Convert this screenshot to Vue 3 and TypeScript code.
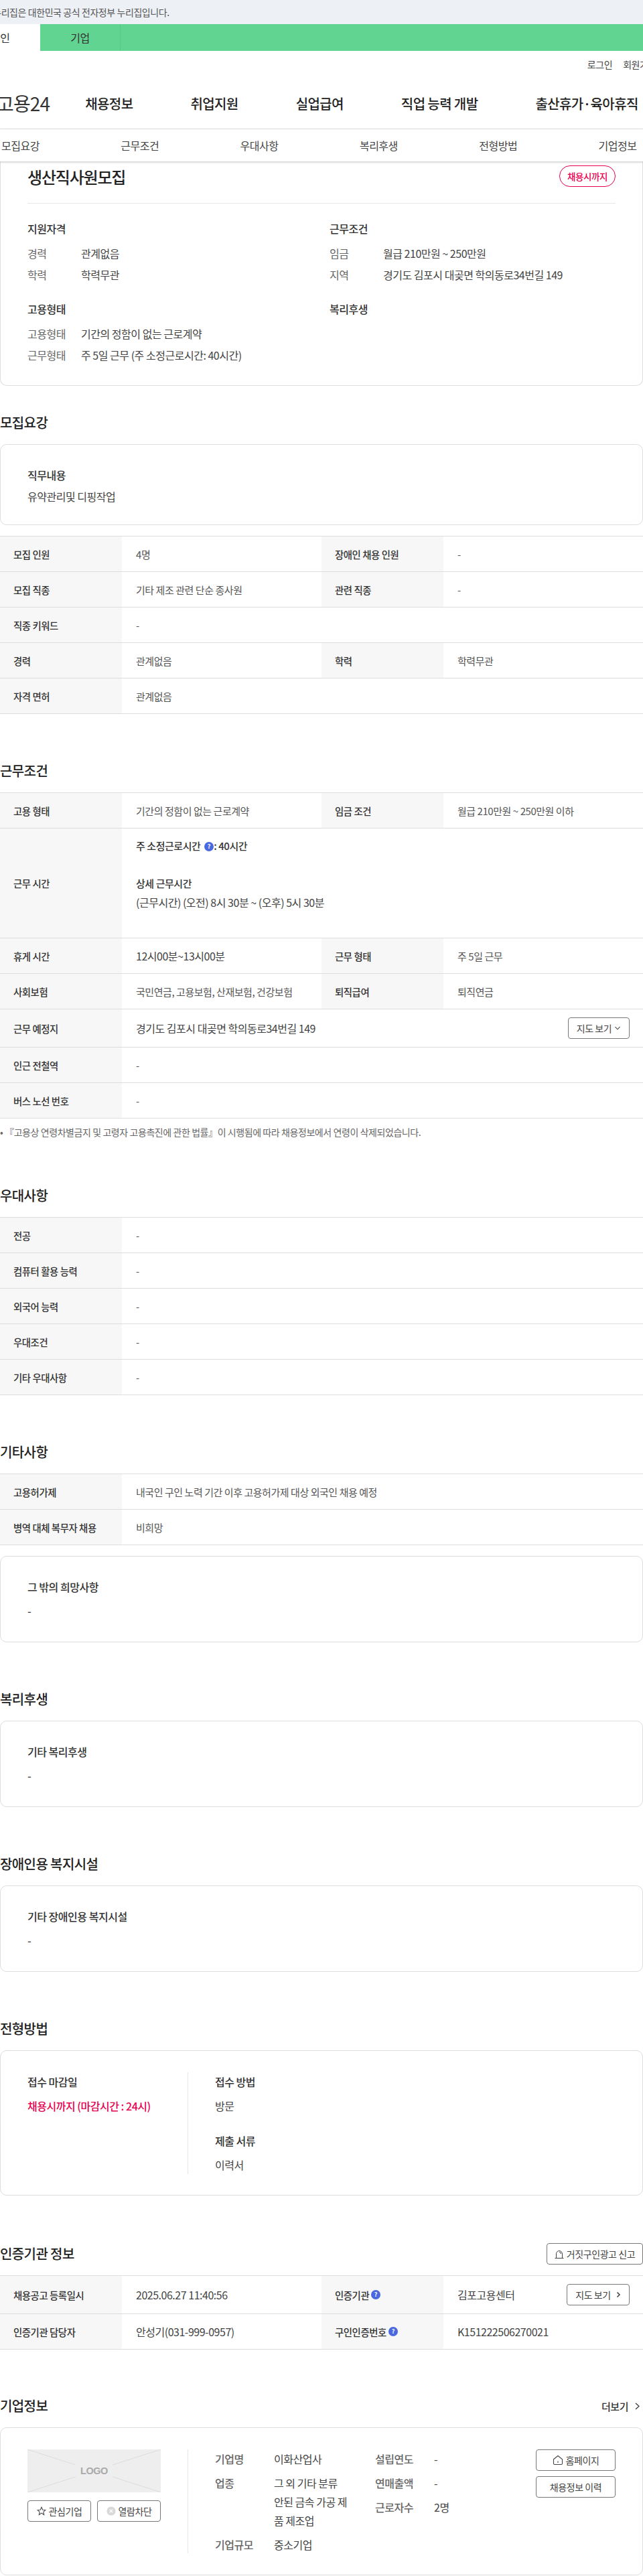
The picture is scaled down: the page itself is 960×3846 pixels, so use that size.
<script setup lang="ts">
interface Cell {
  label: string;
  value: string;
}

const recruitRows: Cell[][] = [
  [{ label: "모집 인원", value: "4명" }, { label: "장애인 채용 인원", value: "-" }],
  [{ label: "모집 직종", value: "기타 제조 관련 단순 종사원" }, { label: "관련 직종", value: "-" }],
  [{ label: "직종 키워드", value: "-" }],
  [{ label: "경력", value: "관계없음" }, { label: "학력", value: "학력무관" }],
  [{ label: "자격 면허", value: "관계없음" }],
];

const preferRows: Cell[] = [
  { label: "전공", value: "-" },
  { label: "컴퓨터 활용 능력", value: "-" },
  { label: "외국어 능력", value: "-" },
  { label: "우대조건", value: "-" },
  { label: "기타 우대사항", value: "-" },
];

const etcRows: Cell[] = [
  { label: "고용허가제", value: "내국인 구인 노력 기간 이후 고용허가제 대상 외국인 채용 예정" },
  { label: "병역 대체 복무자 채용", value: "비희망" },
];

const navItems = ["채용정보", "취업지원", "실업급여", "직업 능력 개발", "출산휴가·육아휴직"];
const subItems = ["모집요강", "근무조건", "우대사항", "복리후생", "전형방법", "기업정보"];
</script>

<template>
  <div class="page">
    <div class="gov">이 누리집은 대한민국 공식 전자정부 누리집입니다.</div>
    <div class="tabs">
      <div class="tab-on">개인</div>
      <div class="tab">기업</div>
    </div>
    <div class="util">
      <span>로그인</span>
      <span>회원가입</span>
    </div>
    <div class="nav">
      <span class="logo">고용24</span>
      <span v-for="n in navItems" :key="n" class="nav-item">{{ n }}</span>
    </div>
    <div class="subnav">
      <span v-for="s in subItems" :key="s">{{ s }}</span>
    </div>

    <section class="card summary">
      <div class="title-row">
        <h1>생산직사원모집</h1>
        <span class="badge">채용시까지</span>
      </div>
      <div class="sum-grid">
        <div class="sum-col">
          <h3>지원자격</h3>
          <dl class="pair"><dt>경력</dt><dd>관계없음</dd></dl>
          <dl class="pair"><dt>학력</dt><dd>학력무관</dd></dl>
        </div>
        <div class="sum-col">
          <h3>근무조건</h3>
          <dl class="pair"><dt>임금</dt><dd>월급 210만원 ~ 250만원</dd></dl>
          <dl class="pair"><dt>지역</dt><dd>경기도 김포시 대곶면 학의동로34번길 149</dd></dl>
        </div>
        <div class="sum-col">
          <h3>고용형태</h3>
          <dl class="pair"><dt>고용형태</dt><dd>기간의 정함이 없는 근로계약</dd></dl>
          <dl class="pair"><dt>근무형태</dt><dd>주 5일 근무 (주 소정근로시간: 40시간)</dd></dl>
        </div>
        <div class="sum-col">
          <h3>복리후생</h3>
        </div>
      </div>
    </section>

    <h2 class="sec">모집요강</h2>
    <div class="card job-card">
      <h3>직무내용</h3>
      <p>유약관리및 디핑작업</p>
    </div>
    <div class="table gap-top">
      <div v-for="(row, i) in recruitRows" :key="i" class="row" :class="{ two: row.length === 2 }">
        <template v-for="c in row" :key="c.label">
          <div class="th">{{ c.label }}</div>
          <div class="td">{{ c.value }}</div>
        </template>
      </div>
    </div>

    <h2 class="sec">근무조건</h2>
    <div class="table">
      <div class="row two">
        <div class="th">고용 형태</div>
        <div class="td">기간의 정함이 없는 근로계약</div>
        <div class="th">임금 조건</div>
        <div class="td">월급 210만원 ~ 250만원 이하</div>
      </div>
      <div class="row hours">
        <div class="th">근무 시간</div>
        <div class="td hours-td">
          <div class="strong">
            주 소정근로시간
            <svg class="help" viewBox="0 0 14 14"><circle cx="7" cy="7" r="7" fill="#4a68e0" /><text x="7" y="10" text-anchor="middle" font-size="9" font-weight="700" fill="#fff">?</text></svg>: 40시간
          </div>
          <div class="strong detail">상세 근무시간</div>
          <div class="dark">(근무시간) (오전) 8시 30분 ~ (오후) 5시 30분</div>
        </div>
      </div>
      <div class="row two">
        <div class="th">휴게 시간</div>
        <div class="td dark">12시00분~13시00분</div>
        <div class="th">근무 형태</div>
        <div class="td">주 5일 근무</div>
      </div>
      <div class="row two">
        <div class="th">사회보험</div>
        <div class="td">국민연금, 고용보험, 산재보험, 건강보험</div>
        <div class="th">퇴직급여</div>
        <div class="td">퇴직연금</div>
      </div>
      <div class="row place">
        <div class="th">근무 예정지</div>
        <div class="td between">
          <span class="dark">경기도 김포시 대곶면 학의동로34번길 149</span>
          <button class="btn map">
            지도 보기
            <svg width="10" height="10" viewBox="0 0 10 10" fill="none" stroke="#444" stroke-width="1.1"><path d="M1.5 3.2 5 6.8l3.5-3.6" /></svg>
          </button>
        </div>
      </div>
      <div class="row">
        <div class="th">인근 전철역</div>
        <div class="td">-</div>
      </div>
      <div class="row">
        <div class="th">버스 노선 번호</div>
        <div class="td">-</div>
      </div>
    </div>
    <p class="note">• 『고용상 연령차별금지 및 고령자 고용촉진에 관한 법률』이 시행됨에 따라 채용정보에서 연령이 삭제되었습니다.</p>

    <h2 class="sec">우대사항</h2>
    <div class="table">
      <div v-for="c in preferRows" :key="c.label" class="row">
        <div class="th">{{ c.label }}</div>
        <div class="td">{{ c.value }}</div>
      </div>
    </div>

    <h2 class="sec">기타사항</h2>
    <div class="table">
      <div v-for="c in etcRows" :key="c.label" class="row">
        <div class="th">{{ c.label }}</div>
        <div class="td">{{ c.value }}</div>
      </div>
    </div>
    <div class="card text-card gap-top">
      <h3>그 밖의 희망사항</h3>
      <p>-</p>
    </div>

    <h2 class="sec">복리후생</h2>
    <div class="card text-card">
      <h3>기타 복리후생</h3>
      <p>-</p>
    </div>

    <h2 class="sec">장애인용 복지시설</h2>
    <div class="card text-card">
      <h3>기타 장애인용 복지시설</h3>
      <p>-</p>
    </div>

    <h2 class="sec">전형방법</h2>
    <div class="card split">
      <div class="split-left">
        <h3>접수 마감일</h3>
        <p class="deadline">채용시까지 (마감시간 : 24시)</p>
      </div>
      <div class="split-right">
        <h3>접수 방법</h3>
        <p>방문</p>
        <h3 class="next">제출 서류</h3>
        <p>이력서</p>
      </div>
    </div>

    <div class="sec-row cert">
      <h2>인증기관 정보</h2>
      <button class="btn report">
        <svg width="14" height="13" viewBox="0 0 14 13" fill="none" stroke="#444" stroke-width="1"><path d="M.5 12.500h13M2.500 12.500V6a4.500 4.500 0 0 1 9 0v6.500M7 3.200A2.800 2.800 0 0 1 9.600 6" /></svg>
        거짓구인광고 신고
      </button>
    </div>
    <div class="table">
      <div class="row two tall">
        <div class="th">채용공고 등록일시</div>
        <div class="td dark">2025.06.27 11:40:56</div>
        <div class="th">
          인증기관
          <svg class="help" viewBox="0 0 14 14"><circle cx="7" cy="7" r="7" fill="#4a68e0" /><text x="7" y="10" text-anchor="middle" font-size="9" font-weight="700" fill="#fff">?</text></svg>
        </div>
        <div class="td between">
          <span class="dark">김포고용센터</span>
          <button class="btn map2">
            지도 보기
            <svg width="7" height="10" viewBox="0 0 7 10" fill="none" stroke="#444" stroke-width="1.600"><path d="M1.500 1.500 5 5 1.500 8.500" /></svg>
          </button>
        </div>
      </div>
      <div class="row two">
        <div class="th">인증기관 담당자</div>
        <div class="td dark">안성기(031-999-0957)</div>
        <div class="th">
          구인인증번호
          <svg class="help" viewBox="0 0 14 14"><circle cx="7" cy="7" r="7" fill="#4a68e0" /><text x="7" y="10" text-anchor="middle" font-size="9" font-weight="700" fill="#fff">?</text></svg>
        </div>
        <div class="td dark">K151222506270021</div>
      </div>
    </div>

    <div class="sec-row company">
      <h2>기업정보</h2>
      <span class="more">
        더보기
        <svg width="7" height="11" viewBox="0 0 7 11" fill="none" stroke="#333" stroke-width="1.200"><path d="M1 1l5 4.500L1 10" /></svg>
      </span>
    </div>
    <div class="card corp">
      <div class="corp-left">
        <div class="logo-box">
          <svg class="logo-x" viewBox="0 0 199 64" preserveAspectRatio="none"><path d="M0 0l199 64M199 0L0 64" stroke="#dcdcdc" stroke-width="1" /></svg>
          <span>LOGO</span>
        </div>
        <div class="corp-btns">
          <button class="btn small">
            <svg width="14" height="14" viewBox="0 0 16 16" fill="none" stroke="#444" stroke-width="1.200"><path d="M8 1.500l2 4.400 4.700.5-3.500 3.200 1 4.700L8 11.500l-4.200 2.800 1-4.700L1.300 6.400l4.700-.5z" /></svg>
            관심기업
          </button>
          <button class="btn small">
            <svg width="14" height="14" viewBox="0 0 16 16"><circle cx="8" cy="8" r="7.500" fill="#d8d8d8" /><path d="M5.300 5.300l5.400 5.400M10.700 5.300l-5.400 5.400" stroke="#fff" stroke-width="1.400" /></svg>
            열람차단
          </button>
        </div>
      </div>
      <div class="corp-info">
        <div class="info-col first">
          <dl class="info"><dt>기업명</dt><dd>이화산업사</dd></dl>
          <dl class="info"><dt>업종</dt><dd>그 외 기타 분류 안된 금속 가공 제품 제조업</dd></dl>
          <dl class="info"><dt>기업규모</dt><dd>중소기업</dd></dl>
        </div>
        <div class="info-col">
          <dl class="info"><dt>설립연도</dt><dd>-</dd></dl>
          <dl class="info"><dt>연매출액</dt><dd>-</dd></dl>
          <dl class="info"><dt>근로자수</dt><dd>2명</dd></dl>
        </div>
      </div>
      <div class="corp-actions">
        <button class="btn wide">
          <svg width="16" height="16" viewBox="0 0 16 16" fill="none" stroke="#444" stroke-width="1.100"><path d="M1.500 6.800 8 1.500l6.500 5.300V13a1.500 1.500 0 0 1-1.500 1.500H3A1.500 1.500 0 0 1 1.500 13z" /><path d="M8 9.500v2.500" /></svg>
          홈페이지
        </button>
        <button class="btn wide">채용정보 이력</button>
      </div>
    </div>
  </div>
</template>

<style scoped>
.page {
  width: 960px;
  overflow: hidden;
  background: #fff;
  color: #333;
  font-family: "Noto Sans CJK KR", "Noto Sans", sans-serif;
  font-size: 16px;
}
.page * {
  letter-spacing: -0.03em;
}

h1, h2, h3, p, dl, dd {
  margin: 0;
  font-weight: 500;
}

.gov {
  height: 36px;
  line-height: 36px;
  background: #edf0f5;
  font-size: 14px;
  color: #555;
  text-indent: -26px;
  white-space: nowrap;
  overflow: hidden;
}

.tabs {
  display: flex;
  height: 40px;
  background: #62d491;
  line-height: 40px;
}
.tab-on {
  width: 60px;
  background: #fff;
  text-indent: -14px;
  white-space: nowrap;
  overflow: hidden;
}
.tab {
  width: 119px;
  text-align: center;
  border-right: 1px solid #57c584;
}

.util {
  height: 40px;
  display: flex;
  justify-content: flex-end;
  align-items: center;
  gap: 16px;
  font-size: 14px;
  color: #444;
  margin-right: -20px;
  white-space: nowrap;
}

.nav {
  height: 76px;
  display: flex;
  align-items: center;
  border-bottom: 1px solid #e6e6e6;
  font-size: 20px;
  font-weight: 500;
  color: #222;
  white-space: nowrap;
}
.logo {
  font-size: 28px;
  font-weight: 400;
  margin-left: -5px;
  margin-right: 53px;
  color: #333;
}
.nav-item {
  margin-right: 86px;
}
.nav-item:last-child {
  margin-right: 0;
}

.subnav {
  position: relative;
  z-index: 1;
  height: 48px;
  display: flex;
  align-items: center;
  padding-left: 2px;
  color: #444;
  background: #fff;
  box-shadow: 0 1px 3px rgba(0, 0, 0, 0.25);
}
.subnav span {
  width: 178.3px;
  flex-shrink: 0;
}

.card {
  border: 1px solid #ddd;
  border-radius: 10px;
  box-sizing: border-box;
  width: 960px;
}

.summary {
  border-top: none;
  border-top-left-radius: 0;
  border-top-right-radius: 0;
  padding: 6px 40px 31px;
}
.title-row {
  display: flex;
  justify-content: space-between;
  align-items: center;
  height: 32px;
  padding-bottom: 24px;
  border-bottom: 1px solid #e6e6e6;
}
.title-row h1 {
  font-size: 24px;
  font-weight: 500;
  letter-spacing: -0.05em;
  color: #222;
}
.badge {
  width: 84px;
  height: 32px;
  line-height: 30px;
  text-align: center;
  border: 1px solid #e6004f;
  border-radius: 16px;
  box-sizing: border-box;
  font-size: 13.5px;
  font-weight: 500;
  color: #e6004f;
}
.sum-grid {
  display: grid;
  grid-template-columns: 451px 1fr;
  row-gap: 23px;
  margin-top: 23px;
}
h3 {
  font-size: 16px;
  line-height: 28px;
  color: #333;
}
.pair {
  display: flex;
  line-height: 28px;
  margin-top: 4px;
  font-weight: 400;
  color: #444;
}
.sum-col h3 {
  margin-bottom: 9px;
}
.pair dt {
  width: 80px;
  color: #666;
}
.pair dd {
  font-weight: 400;
}

.sec {
  font-size: 20px;
  line-height: 30px;
  font-weight: 500;
  color: #222;
  margin: 70px 0 17px;
}
.summary + .sec {
  margin-top: 40px;
}

.job-card {
  padding: 31px 40px 28px;
  height: 121px;
}
.job-card p {
  margin-top: 4px;
  line-height: 28px;
  font-weight: 400;
  color: #444;
}
.gap-top {
  margin-top: 16px;
}

.table {
  border-top: 1px solid #ddd;
  font-size: 15px;
}
.row {
  display: grid;
  grid-template-columns: 182px 1fr;
  min-height: 52px;
  border-bottom: 1px solid #ddd;
}
.row.two {
  grid-template-columns: 182px 298px 182px 1fr;
}
.th {
  display: flex;
  align-items: center;
  padding-left: 20px;
  background: #f7f7f7;
  font-size: 14.4px;
  font-weight: 500;
  color: #333;
}
.td {
  display: flex;
  align-items: center;
  padding: 0 20px 0 21px;
  color: #555;
}
.between {
  justify-content: space-between;
}
.dark {
  font-size: 16px;
  color: #444;
}
.strong {
  font-weight: 500;
  color: #333;
}
.hours {
  min-height: 163px;
}
.hours-td {
  display: block;
  padding-top: 12px;
  line-height: 28px;
}
.detail {
  margin-top: 28px;
}
.help {
  display: inline-block;
  width: 14px;
  height: 14px;
  margin-left: 3px;
  vertical-align: -2px;
  flex-shrink: 0;
}
.place {
  min-height: 56px;
}
.btn {
  display: inline-flex;
  align-items: center;
  justify-content: center;
  gap: 4px;
  height: 32px;
  padding: 0;
  background: #fff;
  border: 1px solid #777;
  border-radius: 4px;
  box-sizing: border-box;
  font-family: inherit;
  font-size: 14px;
  color: #444;
}
.map {
  width: 92px;
}
.map2 {
  width: 94px;
  gap: 8px;
}

.note {
  margin-top: 10px;
  line-height: 20px;
  font-size: 14px;
  font-weight: 400;
  color: #666;
  white-space: nowrap;
}

.text-card {
  padding: 31px 40px 32px;
}
.text-card p {
  margin-top: 8px;
  line-height: 28px;
  color: #444;
}

.split {
  display: flex;
  padding: 32px 40px 31px;
}
.split-left {
  width: 240px;
  border-right: 1px solid #e6e6e6;
  box-sizing: border-box;
}
.split-right {
  padding-left: 40px;
}
.split p {
  margin-top: 8px;
  line-height: 28px;
  font-weight: 400;
  color: #444;
}
.split .deadline {
  color: #e6004f;
  font-weight: 500;
}
.split .next {
  margin-top: 24px;
}

.sec-row {
  display: flex;
  justify-content: space-between;
  align-items: center;
  margin-bottom: 16px;
}
.sec-row h2 {
  font-size: 20px;
  line-height: 30px;
  font-weight: 500;
  color: #222;
}
.cert {
  height: 32px;
  margin-top: 71px;
}
.report {
  width: 144px;
}
.tall {
  min-height: 56px;
}

.company {
  height: 30px;
  margin-top: 69px;
  margin-bottom: 17px;
}
.more {
  display: inline-flex;
  align-items: center;
  gap: 10px;
  padding-right: 5px;
  font-size: 15px;
  font-weight: 500;
  color: #333;
}

.corp {
  display: flex;
  height: 221px;
  padding: 32px 40px;
}
.corp-left {
  width: 240px;
  padding-right: 40px;
  border-right: 1px solid #e6e6e6;
  box-sizing: border-box;
}
.logo-box {
  position: relative;
  width: 199px;
  height: 64px;
  background: #eee;
  display: flex;
  align-items: center;
  justify-content: center;
  font-family: "Liberation Sans", sans-serif;
  font-size: 14.5px;
  font-weight: 700;
  color: #aaa;
}
.logo-box span {
  position: relative;
  padding: 0 7px;
  line-height: 30px;
  background: #eee;
}
.logo-x {
  position: absolute;
  inset: 0;
  width: 100%;
  height: 100%;
}
.corp-btns {
  display: flex;
  justify-content: space-between;
  margin-top: 12px;
}
.small {
  width: 95px;
}
.corp-info {
  display: flex;
  width: 479px;
  padding-left: 40px;
  box-sizing: border-box;
}
.info-col {
  width: 240px;
  flex-shrink: 0;
}
.info-col.first {
  width: 239px;
}
.info {
  display: flex;
  line-height: 28px;
  margin-bottom: 8px;
  color: #444;
}
.info dt {
  width: 88px;
  flex-shrink: 0;
  color: #666;
}
.info dd {
  width: 112px;
  font-weight: 400;
}
.corp-actions {
  display: flex;
  flex-direction: column;
  gap: 8px;
  flex-shrink: 0;
  width: 119px;
  margin-left: auto;
}
.wide {
  width: 119px;
}
</style>

<style>
body {
  margin: 0;
}
</style>
